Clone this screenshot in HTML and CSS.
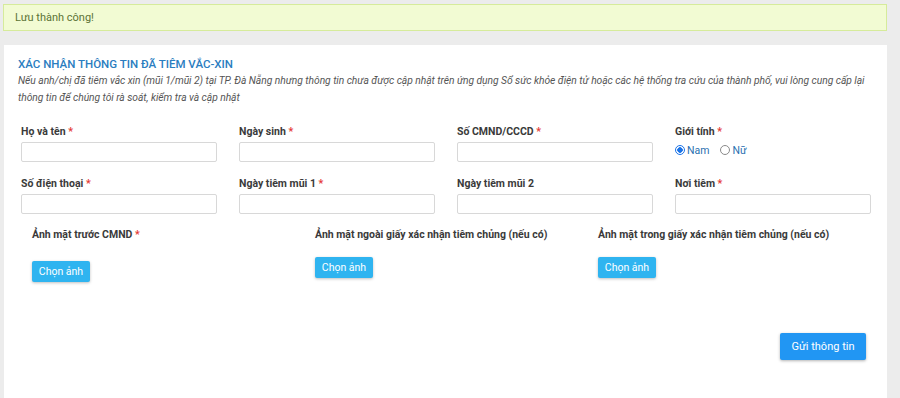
FILE: index.html
```html
<!DOCTYPE html>
<html lang="vi">
<head>
  <meta charset="UTF-8" />
  <title>Xác nhận thông tin đã tiêm vắc-xin</title>
  <link rel="stylesheet" href="styles.css">
</head>
<body>
  <div class="alert">Lưu thành công!</div>

  <section class="card">
    <h2 class="card-title">XÁC NHẬN THÔNG TIN ĐÃ TIÊM VẮC-XIN</h2>
    <p class="card-desc">Nếu anh/chị đã tiêm vắc xin (mũi 1/mũi 2) tại TP. Đà Nẵng nhưng thông tin chưa được cập nhật trên ứng dụng Sổ sức khỏe điện tử hoặc các hệ thống tra cứu của thành phố, vui lòng cung cấp lại thông tin để chúng tôi rà soát, kiểm tra và cập nhật</p>

    <form class="form-grid">
      <div class="field">
        <label>Họ và tên <span class="req">*</span></label>
        <input type="text" />
      </div>
      <div class="field">
        <label>Ngày sinh <span class="req">*</span></label>
        <input type="text" />
      </div>
      <div class="field">
        <label>Số CMND/CCCD <span class="req">*</span></label>
        <input type="text" />
      </div>
      <div class="field">
        <label>Giới tính <span class="req">*</span></label>
        <div class="radios">
          <span class="radio checked"></span><span class="radio-label">Nam</span>
          <span class="radio"></span><span class="radio-label">Nữ</span>
        </div>
      </div>

      <div class="field">
        <label>Số điện thoại <span class="req">*</span></label>
        <input type="text" />
      </div>
      <div class="field">
        <label>Ngày tiêm mũi 1 <span class="req">*</span></label>
        <input type="text" />
      </div>
      <div class="field">
        <label>Ngày tiêm mũi 2</label>
        <input type="text" />
      </div>
      <div class="field">
        <label>Nơi tiêm <span class="req">*</span></label>
        <input type="text" />
      </div>
    </form>

    <div class="uploads">
      <div class="upload">
        <label>Ảnh mặt trước CMND <span class="req">*</span></label>
        <button type="button" class="btn-pick first">Chọn ảnh</button>
      </div>
      <div class="upload">
        <label>Ảnh mặt ngoài giấy xác nhận tiêm chủng (nếu có)</label>
        <button type="button" class="btn-pick">Chọn ảnh</button>
      </div>
      <div class="upload">
        <label>Ảnh mặt trong giấy xác nhận tiêm chủng (nếu có)</label>
        <button type="button" class="btn-pick">Chọn ảnh</button>
      </div>
    </div>

    <div class="actions">
      <button type="button" class="btn-submit">Gửi thông tin</button>
    </div>
  </section>
</body>
</html>
```

FILE: styles.css
```css
body {
  font-family: Roboto, 'Liberation Sans', sans-serif;
  background-color: #ececec;
  color: #333;
  margin: 0;
  padding: 0;
}
.alert {
  margin: 4px 13px 0 3px;
  height: 25px;
  line-height: 25px;
  padding: 0 11px;
  background-color: #f2fbd3;
  border: 1px solid #d6eb9b;
  color: #5c7336;
  font-size: 11px;
}
.card {
  margin: 14px 13px 0 4px;
  background-color: #fff;
  padding: 11px 16px 40px 14px;
  min-height: 300px;
}
.card-title {
  margin: 0;
  font-size: 11.5px;
  font-weight: 500;
  color: #2a7dbf;
  line-height: 16px;
}
.card-desc {
  margin: 0;
  font-size: 10.3px;
  font-style: italic;
  color: #555;
  line-height: 17px;
  letter-spacing: -0.05px;
}
.form-grid {
  display: grid;
  grid-template-columns: repeat(4, 196px);
  column-gap: 22px;
  row-gap: 15px;
  padding-left: 3px;
  margin-top: 19px;
}
.field label,
.upload label {
  display: block;
  font-size: 10.5px;
  font-weight: 700;
  color: #3a3a3a;
  line-height: 14px;
}
.req {
  color: #e53935;
}
.field input {
  display: block;
  box-sizing: border-box;
  width: 196px;
  height: 20px;
  margin-top: 3px;
  border: 1px solid #d8d8d8;
  border-radius: 2px;
  background: #fff;
}
.radios {
  display: flex;
  align-items: center;
  margin-top: 4px;
  height: 14px;
  font-size: 10.5px;
  color: #2a6fb0;
}
.radio {
  box-sizing: border-box;
  width: 10px;
  height: 10px;
  border: 1px solid #8a8a8a;
  border-radius: 50%;
  margin-right: 2px;
}
.radio.checked {
  border-color: #1a73e8;
  background: radial-gradient(circle, #1a73e8 0 2.5px, #fff 3px);
}
.radio-label {
  margin-right: 11px;
}
.uploads {
  display: grid;
  grid-template-columns: repeat(3, 283px);
  padding-left: 14px;
  margin-top: 14px;
}
.btn-pick {
  display: block;
  margin-top: 15px;
  width: 58px;
  height: 21px;
  padding: 0;
  border: none;
  border-radius: 2px;
  background-color: #2fb4f0;
  color: #fff;
  font-family: inherit;
  font-size: 10.5px;
  box-shadow: 0 1px 3px rgba(0,0,0,0.25);
}
.btn-pick.first {
  margin-top: 19px;
}
.actions {
  display: flex;
  justify-content: flex-end;
  margin-top: 51px;
  padding-right: 5px;
}
.btn-submit {
  width: 86px;
  height: 27px;
  padding: 0;
  border: none;
  border-radius: 2px;
  background-color: #2196f3;
  color: #fff;
  font-family: inherit;
  font-size: 11px;
  box-shadow: 0 1px 3px rgba(0,0,0,0.3);
}
```
